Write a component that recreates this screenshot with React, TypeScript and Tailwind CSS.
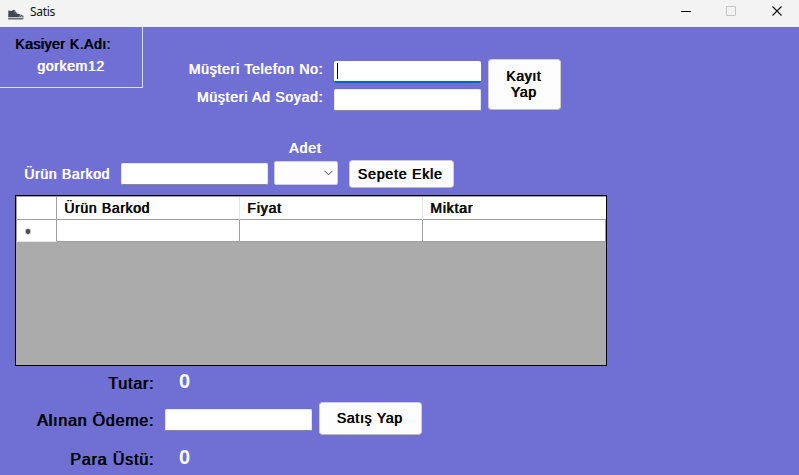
import type { ReactNode } from "react";

function ShoeIcon() {
  return (
    <svg width="16" height="12" viewBox="0 0 16 12" className="ml-2 mt-[2px] shrink-0">
      <path d="M.4 1 1.2 1.8 3.6 2 5.4.8 6.8 1.2 9.2 4.6 14.5 6.3Q15.7 6.8 15.6 8.3L.2 8.3Z" fill="#434750" />
      <path d="M.2 8.9H15.8Q15.5 10.6 13.6 10.6H.2Z" fill="#656971" />
      <path d="M6.2 2.8 8 1.9M7.4 4.5 9.2 3.6M10.8 7.6 13 6.3M12.6 8 14.8 6.9" stroke="#c3c5c9" strokeWidth=".7" />
      <path d="M0 8.6H15.8" stroke="#bfc1c4" strokeWidth=".5" />
    </svg>
  );
}

function TitleBar() {
  return (
    <header className="flex h-[27px] shrink-0 items-center bg-[#f3f3f3] [text-shadow:none]">
      <ShoeIcon />
      <span className="mb-[3px] ml-1.5 font-['Noto_Sans',sans-serif] text-[12px] font-normal leading-4 tracking-[-0.3px] text-[#111]">Satis</span>
      <svg width="119" height="22" viewBox="0 0 119 22" className="mb-[5px] ml-auto shrink-0" fill="none">
        <path d="M1 11.5H11" stroke="#000" />
        <rect x="46.5" y="6.5" width="9" height="9" rx=".5" stroke="#c4c4c4" />
        <path d="M92.5 6.5 101.5 15.5M101.5 6.5 92.5 15.5" stroke="#111" strokeWidth="1.1" />
      </svg>
    </header>
  );
}

function Field({ focused = false }: { focused?: boolean }) {
  return (
    <div
      className={
        focused
          ? "flex h-[22px] w-[147px] items-center rounded-[2px] border-b-2 border-[#0067c0] bg-white pl-[3px]"
          : "h-[22px] w-[147px] rounded-[2px] border border-[#e6e6ee] border-b-[#868686] bg-white"
      }
    >
      {focused && <span className="h-4 w-px bg-black" />}
    </div>
  );
}

function Button({ className, children }: { className: string; children: ReactNode }) {
  return (
    <button className={`rounded-[4px] border border-[#d0d0d0] border-b-[#bcbcbc] bg-[#fdfdfd] text-black [text-shadow:0.8px_0_0_currentColor] ${className}`}>
      {children}
    </button>
  );
}

function GridView() {
  return (
    <div className="ml-[15px] mt-[7px] h-[171px] w-[592px] border border-black bg-[#ababab]">
      <div className="grid grid-cols-[41px_183px_183px_183px] grid-rows-[23px_22px] border-t border-[#a0a0a0] text-black [text-shadow:0.8px_0_0_currentColor]">
        <div className="border-b border-l border-r border-[#a0a0a0] bg-white" />
        <div className="flex items-center border-b border-r border-b-[#a0a0a0] border-r-[#e5e5e5] bg-white pl-[7px]">Ürün Barkod</div>
        <div className="flex items-center border-b border-r border-b-[#a0a0a0] border-r-[#e5e5e5] bg-white pl-[7px] tracking-[0.85px]">Fiyat</div>
        <div className="flex items-center border-b border-b-[#a0a0a0] bg-white pl-[7px] tracking-[0.8px]">Miktar</div>
        <div className="flex items-center border-b border-l border-r border-b-[#e5e5e5] border-l-[#a0a0a0] border-r-[#a0a0a0] bg-white pl-2 pt-[2px]">
          <svg width="6" height="7" viewBox="0 0 6 7">
            <circle cx="3" cy="3.5" r="2.4" fill="#444" />
            <path d="M3 .5V6.5M.5 2 5.5 5M5.5 2 .5 5" stroke="#555" strokeWidth="1" />
          </svg>
        </div>
        <div className="border-b border-r border-[#a0a0a0] bg-white" />
        <div className="border-b border-r border-[#a0a0a0] bg-white" />
        <div className="border-b border-r border-[#a0a0a0] bg-white" />
      </div>
    </div>
  );
}

export default function App() {
  return (
    <div className="flex h-[475px] w-[799px] flex-col overflow-hidden bg-[#7070d4] font-['Liberation_Sans',Arial,sans-serif] text-[14px] leading-4 tracking-[0.65px] text-white [text-shadow:0.8px_0_0_currentColor]">
      <TitleBar />
      <section className="flex h-[84px] shrink-0">
        <div className="h-[61px] w-[143px] border-b border-r border-[#dedee8] pt-[9px]">
          <div className="pl-[15px] tracking-[0.5px] text-black [text-shadow:0.8px_0_0_currentColor]">Kasiyer K.Adı:</div>
          <div className="pl-[37px] pt-[6px]">gorkem12</div>
        </div>
        <div className="flex w-[180px] flex-col items-end whitespace-nowrap pt-[34px]">
          <div className="tracking-[0.75px]">Müşteri Telefon No:</div>
          <div className="mt-3 tracking-[0.75px]">Müşteri Ad Soyad:</div>
        </div>
        <div className="ml-[11px] flex flex-col gap-[6px] pt-[34px]">
          <Field focused />
          <Field />
        </div>
        <Button className="ml-[7px] mt-8 h-[51px] w-[73px] pb-px pr-[2px]">Kayıt<br />Yap</Button>
      </section>
      <div className="mt-[29px] pl-[289px] tracking-[0.9px]">Adet</div>
      <section className="mt-1 flex h-7 shrink-0 items-center">
        <div className="w-[121px] pl-6">Ürün Barkod</div>
        <Field />
        <div className="mb-[2px] ml-1.5 flex h-6 w-16 items-center justify-end rounded-[2px] border border-[#cfcfd5] bg-[#fdfdfd] pr-1">
          <svg width="9" height="6" viewBox="0 0 9 6" fill="none" stroke="#444"><path d="M.5 .8 4.5 4.8 8.5 .8" /></svg>
        </div>
        <Button className="ml-[11px] h-7 w-[105px] whitespace-nowrap pr-[3px] tracking-[0.85px]">Sepete Ekle</Button>
      </section>
      <GridView />
      <section className="grid grid-cols-[154px_1fr] grid-rows-[34px_37px_38px] items-center text-[16px] leading-5">
        <div className="pt-[2px] text-right tracking-[0.8px] text-black [text-shadow:0.8px_0_0_currentColor]">Tutar:</div>
        <div className="pb-1 pl-[25px] text-[20px] font-bold [text-shadow:none]">0</div>
        <div className="pt-1 text-right tracking-[0.8px] text-black [text-shadow:0.8px_0_0_currentColor]">Alınan Ödeme:</div>
        <div className="flex items-center pl-[11px] text-[14px] leading-4">
          <div className="pt-[3px]"><Field /></div>
          <Button className="ml-[7px] h-[33px] w-[103px] pb-[2px] pr-[2px] tracking-[0.75px]">Satış Yap</Button>
        </div>
        <div className="pt-[7px] text-right tracking-[0.85px] text-black [text-shadow:0.8px_0_0_currentColor]">Para Üstü:</div>
        <div className="pl-[25px] pt-[2px] text-[20px] font-bold [text-shadow:none]">0</div>
      </section>
    </div>
  );
}
